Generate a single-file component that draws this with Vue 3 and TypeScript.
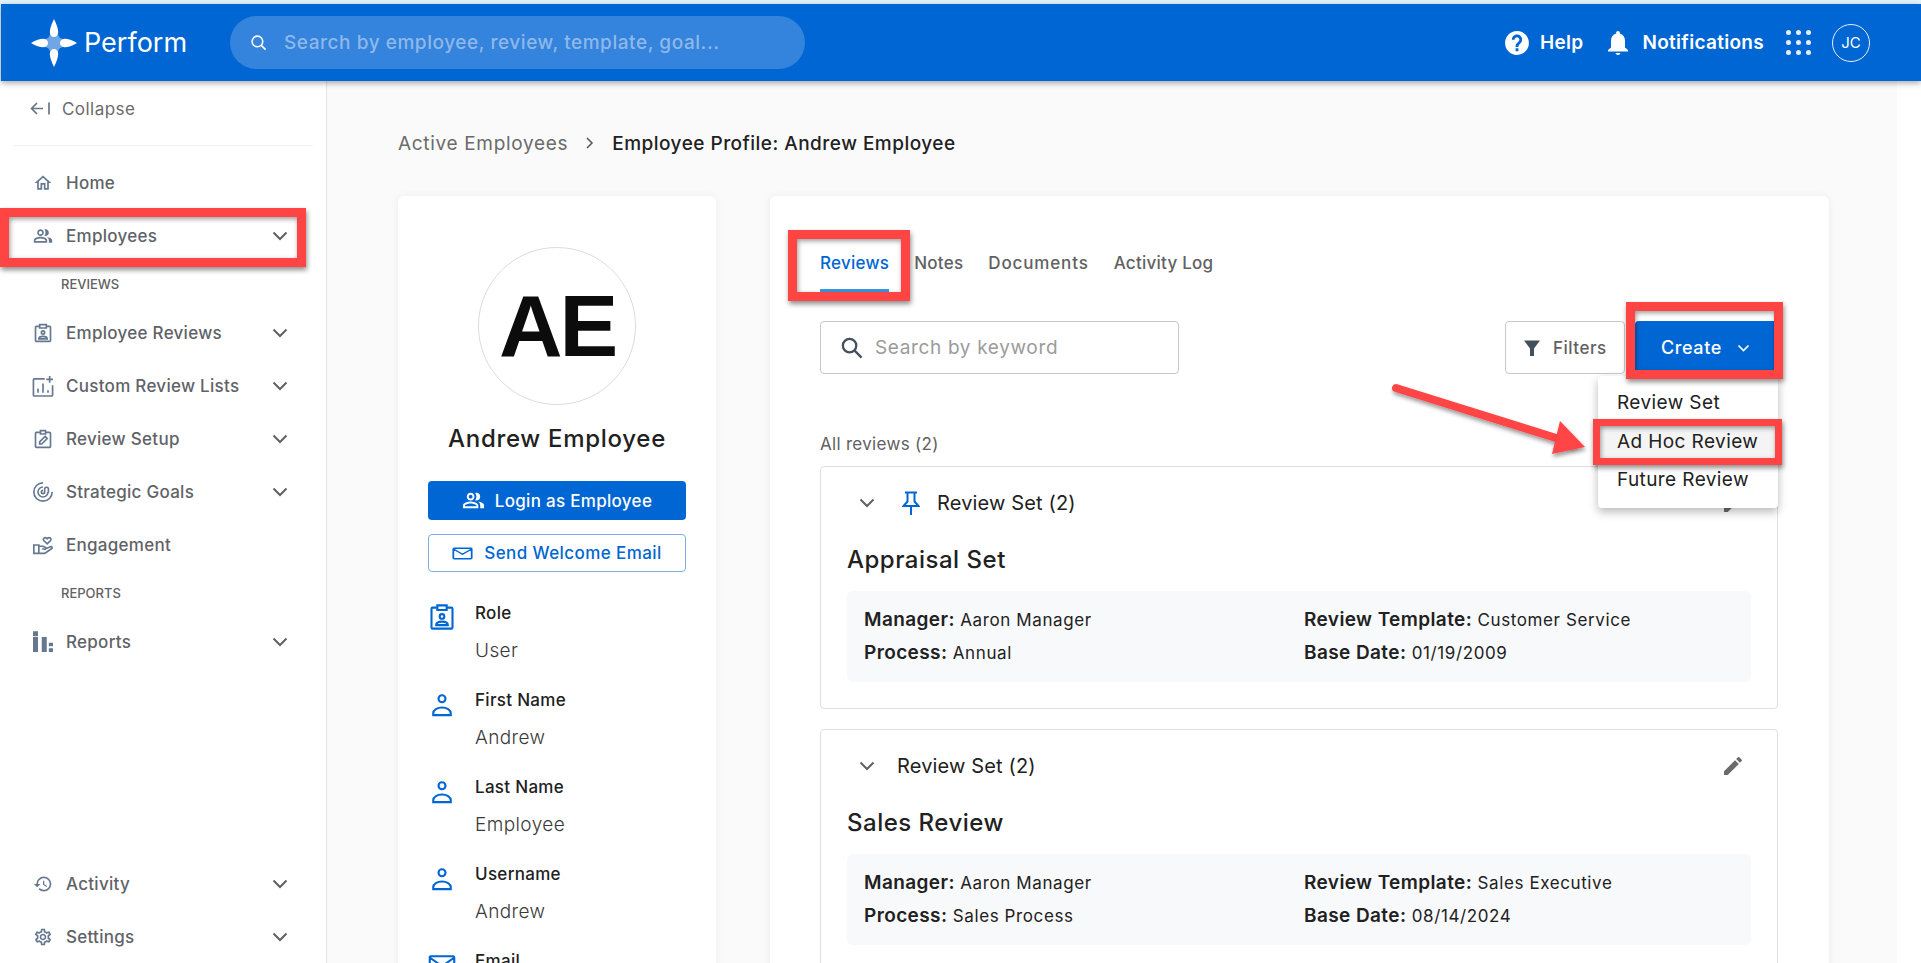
<script setup lang="ts">
interface Icon {
  fill?: string
  stroke?: string
}

interface NavItem {
  label: string
  icon: Icon
  chevron: boolean
}

const icons: Record<string, Icon> = {
  home: { fill: 'M12 5.69l5 4.5V18h-2v-6H9v6H7v-7.81l5-4.5M12 3L2 12h3v8h6v-6h2v6h6v-8h3L12 3z' },
  people: {
    fill: 'M16.67 13.13C18.04 14.06 19 15.32 19 17v3h4v-3c0-2.18-3.57-3.47-6.33-3.87zM15 12c2.21 0 4-1.79 4-4s-1.79-4-4-4c-.47 0-.91.1-1.33.24C14.5 5.27 15 6.58 15 8s-.5 2.73-1.33 3.76c.42.14.86.24 1.33.24zM9 12c2.21 0 4-1.79 4-4s-1.79-4-4-4-4 1.79-4 4 1.79 4 4 4zm0-6c1.1 0 2 .9 2 2s-.9 2-2 2-2-.9-2-2 .9-2 2-2zM9 13c-2.67 0-8 1.34-8 4v3h16v-3c0-2.66-5.33-4-8-4zm6 5H3v-.99C3.2 16.29 6.3 15 9 15s5.8 1.29 6 2v1z'
  },
  badge: {
    stroke: 'M8 4H4a1 1 0 0 0-1 1v16a1 1 0 0 0 1 1h16a1 1 0 0 0 1-1V5a1 1 0 0 0-1-1h-4M8 2h8v4H8zM12 9.5a2 2 0 1 1 0 4 2 2 0 0 1 0-4zM7 19c0-2 2-3 5-3s5 1 5 3z'
  },
  lists: {
    stroke: 'M14 3.500H1.500a1 1 0 0 0-1 1V23a1 1 0 0 0 1 1h21a1 1 0 0 0 1-1V11M6 20v-5M12 20V9M18 20v-3M20 0v8M16 4h8'
  },
  setup: {
    stroke: 'M8 4H4a1 1 0 0 0-1 1v16a1 1 0 0 0 1 1h16a1 1 0 0 0 1-1V5a1 1 0 0 0-1-1h-4M9 2h6v4H9zM8 18v-2.5l6.5-6.5 2.5 2.5-6.5 6.5z'
  },
  goals: {
    stroke: 'M12 1a11 11 0 1 0 11 11M12 6a6 6 0 1 0 6 6M12 10a2 2 0 1 0 2 2V8.5c0-3 4.500-3 4.500 0V13'
  },
  engagement: {
    stroke: 'M1 12h6v10H1zM7 13.500h5l3 1.500c1 .7.4 2.400-1 2.100l-3-.6M15 16.500l6-2.300c1.800-.6 2.800 1.300 1.200 2.300L14 22H7M17 10.500l-4-3.800c-1.800-2 .9-4.700 3.300-2.800l.7.7.7-.7c2.400-1.900 5.100.8 3.300 2.800z'
  },
  reports: { fill: 'M0-1h6v6H0zM0 6h6v18H0zM10.500 6h6v18h-6zM19 13h5v4h-5zM19 19.500h5V24h-5z' },
  activity: {
    fill: 'M13 3a9 9 0 0 0-9 9H1l3.89 3.89.07.14L9 12H6c0-3.87 3.13-7 7-7s7 3.13 7 7-3.13 7-7 7c-1.93 0-3.68-.79-4.94-2.06l-1.42 1.42A8.954 8.954 0 0 0 13 21a9 9 0 0 0 0-18zm-1 5v5l4.28 2.54.72-1.21-3.5-2.08V8H12z'
  },
  settings: {
    fill: 'M19.43 12.98c.04-.32.07-.64.07-.98 0-.34-.03-.66-.07-.98l2.11-1.65c.19-.15.24-.42.12-.64l-2-3.46c-.09-.16-.26-.25-.44-.25-.06 0-.12.01-.17.03l-2.49 1c-.52-.4-1.08-.73-1.69-.98l-.38-2.65C14.46 2.18 14.25 2 14 2h-4c-.25 0-.46.18-.49.42l-.38 2.65c-.61.25-1.17.59-1.69.98l-2.49-1c-.06-.02-.12-.03-.18-.03-.17 0-.34.09-.43.25l-2 3.46c-.13.22-.07.49.12.64l2.11 1.65c-.04.32-.07.65-.07.98 0 .33.03.66.07.98l-2.11 1.65c-.19.15-.24.42-.12.64l2 3.46c.09.16.26.25.44.25.06 0 .12-.01.17-.03l2.49-1c.52.4 1.08.73 1.69.98l.38 2.65c.03.24.24.42.49.42h4c.25 0 .46-.18.49-.42l.38-2.65c.61-.25 1.17-.59 1.69-.98l2.49 1c.06.02.12.03.18.03.17 0 .34-.09.43-.25l2-3.46c.12-.22.07-.49-.12-.64l-2.11-1.65zm-1.98-1.71c.04.31.05.52.05.73 0 .21-.02.43-.05.73l-.14 1.13.89.7 1.08.84-.7 1.21-1.27-.51-1.04-.42-.9.68c-.43.32-.84.56-1.25.73l-1.06.43-.16 1.13-.2 1.35h-1.4l-.19-1.35-.16-1.13-1.06-.43c-.43-.18-.83-.41-1.23-.71l-.91-.7-1.06.43-1.27.51-.7-1.21 1.08-.84.89-.7-.14-1.13c-.03-.31-.05-.54-.05-.74s.02-.43.05-.73l.14-1.13-.89-.7-1.08-.84.7-1.21 1.27.51 1.04.42.9-.68c.43-.32.84-.56 1.25-.73l1.06-.43.16-1.13.2-1.35h1.39l.19 1.35.16 1.13 1.06.43c.43.18.83.41 1.23.71l.91.7 1.06-.43 1.27-.51.7 1.21-1.07.85-.89.7.14 1.13zM12 8c-2.21 0-4 1.79-4 4s1.79 4 4 4 4-1.79 4-4-1.79-4-4-4zm0 6c-1.1 0-2-.9-2-2s.9-2 2-2 2 .9 2 2-.9 2-2 2z'
  },
  person: {
    stroke: 'M12 4.500a3 3 0 1 1 0 6 3 3 0 0 1 0-6zM4.500 21.500V20c0-3 3.500-5 7.500-5s7.500 2 7.500 5v1.500z'
  },
  mail: { stroke: 'M2.500 4.500h19a1 1 0 0 1 1 1v13a1 1 0 0 1-1 1h-19a1 1 0 0 1-1-1v-13a1 1 0 0 1 1-1zM2 6l10 7 10-7' }
}

const topNav: (NavItem | { section: string })[] = [
  { label: 'Home', icon: icons.home, chevron: false },
  { label: 'Employees', icon: icons.people, chevron: true },
  { section: 'REVIEWS' },
  { label: 'Employee Reviews', icon: icons.badge, chevron: true },
  { label: 'Custom Review Lists', icon: icons.lists, chevron: true },
  { label: 'Review Setup', icon: icons.setup, chevron: true },
  { label: 'Strategic Goals', icon: icons.goals, chevron: true },
  { label: 'Engagement', icon: icons.engagement, chevron: false },
  { section: 'REPORTS' },
  { label: 'Reports', icon: icons.reports, chevron: true }
]

const bottomNav: NavItem[] = [
  { label: 'Activity', icon: icons.activity, chevron: true },
  { label: 'Settings', icon: icons.settings, chevron: true }
]

const fields = [
  { label: 'Role', value: 'User', icon: icons.badge },
  { label: 'First Name', value: 'Andrew', icon: icons.person },
  { label: 'Last Name', value: 'Employee', icon: icons.person },
  { label: 'Username', value: 'Andrew', icon: icons.person },
  { label: 'Email', value: '', icon: icons.mail }
]

const tabs = ['Reviews', 'Notes', 'Documents', 'Activity Log']

const reviewSets = [
  {
    title: 'Appraisal Set',
    pinned: true,
    manager: 'Aaron Manager',
    process: 'Annual',
    template: 'Customer Service',
    date: '01/19/2009'
  },
  {
    title: 'Sales Review',
    pinned: false,
    manager: 'Aaron Manager',
    process: 'Sales Process',
    template: 'Sales Executive',
    date: '08/14/2024'
  }
]
</script>

<template>
  <div class="page">
    <header class="topbar">
      <div class="logo">
        <svg width="48" height="48" viewBox="0 0 48 48">
          <path d="M24 8 L29.500 18.500 L40 24 L29.500 29.500 L24 40 L18.500 29.500 L8 24 L18.500 18.500 Z" fill="#6ea6e6" />
          <path d="M24 0c2.500 5 4.200 10 4.200 13 0 3-1.800 5-4.200 5s-4.200-2-4.200-5c0-3 1.700-8 4.200-13z" fill="#fff" />
          <path d="M24 48c2.500-5 4.200-10 4.200-13 0-3-1.800-5-4.200-5s-4.200 2-4.200 5c0 3 1.700 8 4.200 13z" fill="#fff" />
          <path d="M1 24c5-3 9-4.200 12-4.200 3 0 5 1.800 5 4.200s-2 4.200-5 4.200c-3 0-7-1.200-12-4.200z" fill="#fff" />
          <path d="M47 24c-5-3-9-4.200-12-4.200-3 0-5 1.800-5 4.200s2 4.200 5 4.200c3 0 7-1.200 12-4.200z" fill="#fff" />
        </svg>
        <span>Perform</span>
      </div>
      <div class="global-search">
        <svg width="17" height="17" viewBox="0 0 24 24" fill="none" stroke="#fff" stroke-width="2.200">
          <circle cx="10.500" cy="10.500" r="7.500" />
          <path d="M16 16l6 6" />
        </svg>
        <span>Search by employee, review, template, goal...</span>
      </div>
      <div class="top-actions">
        <svg class="top-icon" width="26" height="26" viewBox="0 0 24 24" fill="#fff">
          <path d="M12 1C5.900 1 1 5.900 1 12s4.900 11 11 11 11-4.900 11-11S18.100 1 12 1zm1.300 18.500h-2.600v-2.600h2.600v2.600zm2.400-7.700l-1.100 1.100c-.9.900-1.300 1.500-1.300 2.900h-2.600v-.6c0-1.200.4-2.300 1.300-3.200l1.500-1.500c.4-.4.700-1 .7-1.600 0-1.200-1-2.200-2.200-2.200S9.800 7.700 9.800 8.900H7.300c0-2.600 2.100-4.700 4.700-4.700s4.700 2.100 4.700 4.700c0 1.100-.4 2.100-1 2.900z" />
        </svg>
        <span class="top-label help">Help</span>
        <svg class="top-icon bell" width="24" height="26" viewBox="0 0 24 26" fill="#fff">
          <path d="M12 1c-1.100 0-1.800.8-1.800 1.800v.8C6.800 4.500 5 7.400 5 11v6.500L2 20v1.500h20V20l-3-2.500V11c0-3.600-1.800-6.500-5.200-7.400v-.8C13.800 1.800 13.100 1 12 1zM9.500 23c.3 1.200 1.300 2 2.500 2s2.200-.8 2.500-2z" />
        </svg>
        <span class="top-label">Notifications</span>
        <div class="apps">
          <i v-for="n in 9" :key="n" />
        </div>
        <div class="initials">JC</div>
      </div>
    </header>

    <div class="body">
      <aside class="sidebar">
        <div class="collapse">
          <svg width="21" height="16" viewBox="0 0 21 16" fill="none" stroke="#6b7683" stroke-width="1.700">
            <path d="M7 2L1.500 7.500 7 13M2 7.500h11M19 1.500v12" />
          </svg>
          <span>Collapse</span>
        </div>
        <nav class="nav">
          <template v-for="item in topNav" :key="'section' in item ? item.section : item.label">
            <div v-if="'section' in item" class="nav-section">{{ item.section }}</div>
            <div v-else class="nav-row">
              <svg class="nav-icon" width="20" height="20" viewBox="0 0 24 24">
                <path v-if="item.icon.fill" :d="item.icon.fill" fill="#66788f" />
                <path v-if="item.icon.stroke" :d="item.icon.stroke" fill="none" stroke="#66788f" stroke-width="2" />
              </svg>
              <span class="nav-label">{{ item.label }}</span>
              <svg v-if="item.chevron" class="chev" width="16" height="10" viewBox="0 0 16 10" fill="none" stroke="#616161" stroke-width="2">
                <path d="M1.500 1.500L8 8l6.500-6.500" />
              </svg>
            </div>
          </template>
        </nav>
        <nav class="nav bottom">
          <div v-for="item in bottomNav" :key="item.label" class="nav-row">
            <svg class="nav-icon" width="20" height="20" viewBox="0 0 24 24">
              <path :d="item.icon.fill" fill="#66788f" />
            </svg>
            <span class="nav-label">{{ item.label }}</span>
            <svg class="chev" width="16" height="10" viewBox="0 0 16 10" fill="none" stroke="#616161" stroke-width="2">
              <path d="M1.500 1.500L8 8l6.500-6.500" />
            </svg>
          </div>
        </nav>
      </aside>

      <main class="main">
        <div class="crumbs">
          <span class="crumb-link">Active Employees</span>
          <svg width="10" height="14" viewBox="0 0 10 14" fill="none" stroke="#555" stroke-width="1.500">
            <path d="M2 2l5 5-5 5" />
          </svg>
          <span class="crumb-now">Employee Profile: Andrew Employee</span>
        </div>

        <div class="columns">
          <section class="profile">
            <div class="avatar"><span>AE</span></div>
            <h2 class="name">Andrew Employee</h2>
            <button class="btn-login">
              <svg width="23" height="23" viewBox="0 0 24 24">
                <path :d="icons.people.fill" fill="#fff" />
              </svg>
              Login as Employee
            </button>
            <button class="btn-welcome">
              <svg width="21" height="17" viewBox="0 0 24 24" preserveAspectRatio="none">
                <path :d="icons.mail.stroke" fill="none" stroke="#0066d3" stroke-width="2" />
              </svg>
              Send Welcome Email
            </button>
            <dl class="fields">
              <div v-for="field in fields" :key="field.label" class="field">
                <svg width="28" height="28" viewBox="0 0 24 24">
                  <path :d="field.icon.stroke" fill="none" stroke="#0066d3" stroke-width="1.800" />
                </svg>
                <div>
                  <dt>{{ field.label }}</dt>
                  <dd v-if="field.value">{{ field.value }}</dd>
                </div>
              </div>
            </dl>
          </section>

          <section class="reviews">
            <div class="tabs">
              <div v-for="(tab, i) in tabs" :key="tab" class="tab" :class="{ active: i === 0 }">{{ tab }}</div>
            </div>

            <div class="toolbar">
              <div class="keyword">
                <svg width="23" height="23" viewBox="0 0 24 24" fill="none" stroke="#44505e" stroke-width="2.400">
                  <circle cx="10" cy="10" r="7" />
                  <path d="M15 15l7.500 7.500" />
                </svg>
                <span>Search by keyword</span>
              </div>
              <button class="btn-filters">
                <svg width="18" height="18" viewBox="0 0 18 18" fill="#44505e">
                  <path d="M1 1.500h16L11 9.500V17H7V9.500z" />
                </svg>
                Filters
              </button>
              <button class="btn-create">
                Create
                <svg width="13" height="8" viewBox="0 0 13 8" fill="none" stroke="#fff" stroke-width="1.600">
                  <path d="M1.500 1.500l5 5 5-5" />
                </svg>
              </button>
            </div>

            <div class="count">All reviews (2)</div>

            <article v-for="set in reviewSets" :key="set.title" class="set-card">
              <div class="set-head">
                <svg class="chev" width="16" height="10" viewBox="0 0 16 10" fill="none" stroke="#616161" stroke-width="2">
                  <path d="M1.500 1.500L8 8l6.500-6.500" />
                </svg>
                <svg v-if="set.pinned" class="pin" width="18" height="24" viewBox="0 0 18 24" fill="none" stroke="#0066d3" stroke-width="2">
                  <path d="M3 1.500h12M5.500 1.500v9L1.500 15h15l-4-4.500v-9M9 15v9" />
                </svg>
                <span class="set-name">Review Set (2)</span>
                <svg class="pencil" width="24" height="24" viewBox="0 0 24 24" fill="#6b6b6b">
                  <path d="M3 17.250V21h3.750L17.810 9.940l-3.750-3.750L3 17.250zM20.710 7.040a1 1 0 0 0 0-1.410l-2.340-2.340a1 1 0 0 0-1.410 0l-1.830 1.830 3.750 3.750 1.830-1.830z" />
                </svg>
              </div>
              <h3 class="set-title">{{ set.title }}</h3>
              <div class="details">
                <div><b>Manager:</b> {{ set.manager }}</div>
                <div><b>Review Template:</b> {{ set.template }}</div>
                <div><b>Process:</b> {{ set.process }}</div>
                <div><b>Base Date:</b> {{ set.date }}</div>
              </div>
            </article>
          </section>
        </div>

        <div class="menu">
          <div class="menu-item">Review Set</div>
          <div class="menu-item hover">Ad Hoc Review</div>
          <div class="menu-item">Future Review</div>
        </div>
      </main>
    </div>

    <div class="mark mark-employees" />
    <div class="mark mark-tab" />
    <div class="mark mark-create" />
    <div class="mark mark-adhoc" />
    <svg class="arrow" width="210" height="90" viewBox="0 0 210 90">
      <defs>
        <filter id="arrow-shadow" x="-10%" y="-20%" width="120%" height="150%">
          <feDropShadow dx="1" dy="3" stdDeviation="2" flood-color="#000" flood-opacity="0.4" />
        </filter>
      </defs>
      <path d="M8 8L184 63" stroke="#ff4444" stroke-width="8" stroke-linecap="round" filter="url(#arrow-shadow)" />
      <path d="M172 41L197 67 164 74Z" fill="#ff4444" filter="url(#arrow-shadow)" />
    </svg>
  </div>
</template>

<style>
html,
body {
  margin: 0;
  background: #fff;
}
</style>

<style scoped>
.page {
  position: relative;
  display: flex;
  flex-direction: column;
  width: 1921px;
  height: 963px;
  overflow: hidden;
  padding-top: 4px;
  box-sizing: border-box;
  background: #e3f3fd;
  font-family: Inter, 'Open Sans', 'Liberation Sans', sans-serif;
  color: #212121;
}

.topbar {
  position: relative;
  z-index: 2;
  display: flex;
  align-items: center;
  flex: 0 0 77px;
  margin-left: 1px;
  padding: 0 51px 0 29px;
  background: #0066d3;
  box-shadow: 0 2px 6px rgba(0, 0, 0, 0.35);
  color: #fff;
}

.logo {
  display: flex;
  align-items: center;
  gap: 6px;
  width: 200px;
  font-size: 27px;
}

.global-search {
  display: flex;
  align-items: center;
  gap: 17px;
  width: 575px;
  height: 53px;
  padding-left: 20px;
  box-sizing: border-box;
  border-radius: 27px;
  background: #3483dc;
  font-size: 19px;
  letter-spacing: 0.55px;
  font-weight: 500;
}

.global-search span {
  color: #8fb8ea;
}

.top-actions {
  display: flex;
  align-items: center;
  margin-left: auto;
}

.top-label {
  font-size: 19px;
  letter-spacing: 0.3px;
  font-weight: 600;
}

.help {
  margin: 0 23px 0 10px;
}

.bell {
  margin-right: 12px;
}

.apps {
  display: grid;
  grid-template-columns: repeat(3, 5px);
  gap: 5px;
  margin: 0 21px 0 22px;
}

.apps i {
  width: 5px;
  height: 5px;
  border-radius: 50%;
  background: #e6effa;
}

.initials {
  display: flex;
  align-items: center;
  justify-content: center;
  width: 38px;
  height: 38px;
  box-sizing: border-box;
  border: 1px solid #e6effa;
  border-radius: 50%;
  font-size: 15px;
}

.body {
  display: flex;
  flex: 1;
  min-height: 0;
  background: #fff;
}

.sidebar {
  display: flex;
  flex-direction: column;
  flex: 0 0 326px;
  border-right: 1px solid #e2e2e2;
  background: #fff;
}

.collapse {
  display: flex;
  align-items: center;
  gap: 11px;
  height: 65px;
  margin: 0 13px;
  padding: 0 0 9px 17px;
  box-sizing: border-box;
  border-bottom: 1px solid #f2f2f2;
  color: #6b6b6b;
  font-size: 17px;
  letter-spacing: 0.45px;
}

.nav {
  padding-top: 10px;
}

.nav.bottom {
  margin-top: auto;
  padding-top: 0;
}

.nav-row {
  display: flex;
  align-items: center;
  height: 53px;
  padding: 0 38px 0 33px;
}

.nav-icon {
  flex: none;
  margin-right: 13px;
  overflow: visible;
}

.nav-label {
  flex: 1;
  color: #5f6368;
  font-size: 17px;
  letter-spacing: 0.28px;
  font-weight: 500;
}

.nav-section {
  display: flex;
  align-items: center;
  height: 44px;
  padding-left: 61px;
  color: #616161;
  font-size: 13px;
  font-weight: 500;
}

.main {
  position: relative;
  flex: 0 0 1570px;
  padding: 0 0 0 71px;
  box-sizing: border-box;
  background: #fafafa;
}

.crumbs {
  display: flex;
  align-items: center;
  gap: 17px;
  height: 0;
  padding-top: 62px;
  font-size: 19px;
  font-weight: 500;
  box-sizing: content-box;
}

.crumb-link {
  color: #6b6b6b;
  font-weight: 400;
  letter-spacing: 0.68px;
}

.crumb-now {
  letter-spacing: 0.48px;
}

.columns {
  display: flex;
  gap: 54px;
  margin-top: 53px;
  align-items: flex-start;
}

.profile {
  flex: 0 0 318px;
  height: 800px;
  padding: 51px 30px 0;
  box-sizing: border-box;
  border-radius: 6px;
  background: #fff;
  box-shadow: 0 0 8px rgba(0, 0, 0, 0.06);
}

.avatar {
  display: flex;
  align-items: center;
  justify-content: center;
  width: 158px;
  height: 158px;
  margin: 0 auto;
  box-sizing: border-box;
  border: 1px solid #dcdcdc;
  border-radius: 50%;
  color: #0c0c0c;
  font-family: 'Liberation Sans', sans-serif;
  font-size: 88px;
  font-weight: 700;
  letter-spacing: -3px;
}

.avatar span {
  filter: blur(0.6px);
}

.name {
  margin: 16px 0 24px;
  color: #212121;
  font-size: 24px;
  letter-spacing: 0.7px;
  font-weight: 500;
  line-height: 36px;
  text-align: center;
}

.btn-login,
.btn-welcome {
  display: flex;
  align-items: center;
  justify-content: center;
  width: 100%;
  font-family: inherit;
  font-size: 17px;
  font-weight: 500;
  border-radius: 4px;
}

.btn-login {
  gap: 10px;
  height: 39px;
  border: 0;
  background: #0066d3;
  color: #fff;
  letter-spacing: 0.3px;
}

.btn-welcome {
  gap: 11px;
  height: 38px;
  margin-top: 14px;
  border: 1px solid #7ab0e8;
  background: #fff;
  color: #0066d3;
  letter-spacing: 0.42px;
}

.fields {
  margin: 29px 0 0;
}

.field {
  display: flex;
  gap: 19px;
  height: 87px;
}

.field svg {
  flex: none;
  margin-top: 2px;
}

.field dt {
  font-size: 17px;
  letter-spacing: 0.3px;
  font-weight: 500;
  line-height: 24px;
}

.field dd {
  margin: 14px 0 0;
  color: #3a3a3a;
  font-size: 19px;
  letter-spacing: 0.4px;
  font-weight: 300;
  line-height: 24px;
}

.reviews {
  flex: 0 0 1059px;
  height: 800px;
  padding: 0 51px 0 50px;
  box-sizing: border-box;
  border-radius: 6px;
  background: #fff;
  box-shadow: 0 0 8px rgba(0, 0, 0, 0.06);
}

.tabs {
  display: flex;
  gap: 25px;
  height: 96px;
  padding-top: 50px;
  box-sizing: border-box;
}

.tab {
  height: 46px;
  color: #616161;
  font-size: 17px;
  letter-spacing: 0.25px;
  font-weight: 500;
  line-height: 34px;
  box-sizing: border-box;
}

.tab:nth-child(3) {
  letter-spacing: 0.85px;
}

.tab.active {
  border-bottom: 3px solid #3a97e0;
  color: #0066d3;
}

.toolbar {
  display: flex;
  align-items: center;
  height: 53px;
  margin-top: 29px;
}

.keyword {
  display: flex;
  align-items: center;
  gap: 12px;
  width: 359px;
  height: 53px;
  margin-right: auto;
  padding-left: 19px;
  box-sizing: border-box;
  border: 1px solid #c8c8c8;
  border-radius: 4px;
  color: #9b9b9b;
  font-size: 19px;
  letter-spacing: 0.65px;
}

.btn-filters {
  display: flex;
  align-items: center;
  gap: 12px;
  width: 120px;
  height: 53px;
  padding: 0 0 0 17px;
  border: 1px solid #c8c8c8;
  border-radius: 4px;
  background: #fff;
  color: #616161;
  font-family: inherit;
  font-size: 17px;
  letter-spacing: 0.5px;
  font-weight: 500;
}

.btn-create {
  display: flex;
  align-items: center;
  gap: 15px;
  width: 143px;
  height: 53px;
  margin-left: 10px;
  padding: 0 0 0 26px;
  border: 0;
  border-radius: 4px;
  background: #0066d3;
  color: #fff;
  font-family: inherit;
  font-size: 18px;
  letter-spacing: 0.6px;
  font-weight: 500;
}

.count {
  margin-top: 58px;
  color: #616161;
  font-size: 17px;
  letter-spacing: 0.3px;
  font-weight: 400;
  line-height: 24px;
}

.set-card {
  height: 243px;
  margin-top: 10px;
  padding: 0 26px;
  box-sizing: border-box;
  border: 1px solid #e0e0e0;
  border-radius: 4px;
}

.set-card + .set-card {
  height: 260px;
  margin-top: 20px;
}

.set-head {
  display: flex;
  align-items: center;
  height: 72px;
  padding: 0 0 0 12px;
}

.set-head .chev {
  margin-right: 22px;
}

.pin {
  margin-left: 5px;
  margin-right: 17px;
}

.set-name {
  flex: 1;
  font-size: 20px;
  letter-spacing: 0.15px;
  font-weight: 400;
}

.pencil {
  margin-right: 6px;
}

.set-title {
  margin: 3px 0 0;
  font-size: 24px;
  letter-spacing: 0.5px;
  font-weight: 500;
  line-height: 36px;
}

.details {
  display: grid;
  grid-template-columns: 440px 1fr;
  row-gap: 9px;
  margin-top: 13px;
  padding: 17px;
  border-radius: 6px;
  background: #f8f9fb;
  font-size: 17px;
  letter-spacing: 0.6px;
  line-height: 24px;
}

.details b {
  font-size: 19px;
  letter-spacing: 0.4px;
  font-weight: 600;
}

.menu {
  position: absolute;
  z-index: 1;
  top: 295px;
  left: 1271px;
  width: 180px;
  height: 132px;
  padding-top: 8px;
  box-sizing: border-box;
  border-radius: 4px;
  background: #fff;
  box-shadow: 0 4px 10px rgba(0, 0, 0, 0.28);
}

.menu-item {
  height: 38.500px;
  padding-left: 19px;
  font-size: 19px;
  letter-spacing: 0.4px;
  font-weight: 400;
  line-height: 38px;
}

.menu-item.hover {
  background: #f4f4f4;
}

.mark {
  position: absolute;
  z-index: 3;
  box-sizing: border-box;
  border: 9px solid #ff4444;
  box-shadow: 1px 3px 5px rgba(0, 0, 0, 0.45), inset 1px 2px 5px rgba(0, 0, 0, 0.4);
}

.mark-employees {
  top: 208px;
  left: 0;
  width: 306px;
  height: 59px;
}

.mark-tab {
  top: 230px;
  left: 788px;
  width: 122px;
  height: 71px;
}

.mark-create {
  top: 302px;
  left: 1626px;
  width: 157px;
  height: 77px;
}

.mark-adhoc {
  top: 419px;
  left: 1593px;
  width: 189px;
  height: 46px;
  border-width: 7px;
}

.arrow {
  position: absolute;
  z-index: 3;
  top: 380px;
  left: 1388px;
}
</style>
